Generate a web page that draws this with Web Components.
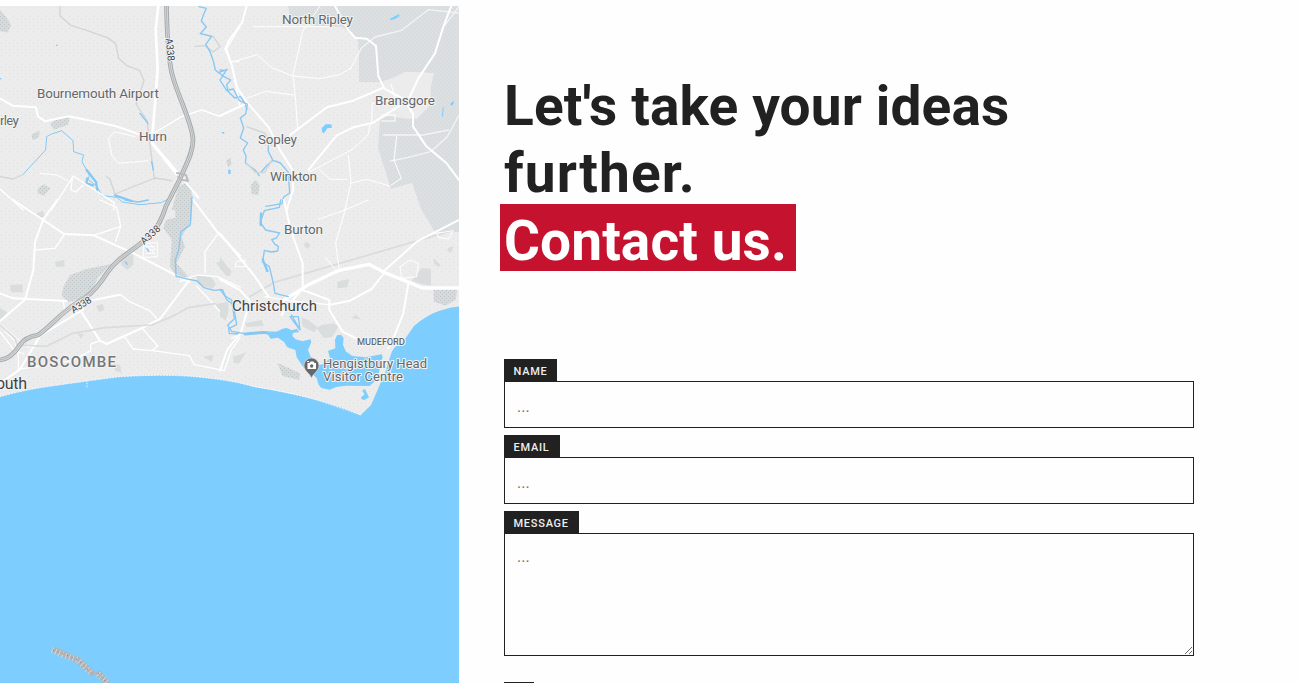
<!DOCTYPE html>
<html lang="en">
<head>
<meta charset="utf-8">
<title>Contact us</title>
<style>
html,body{margin:0;height:100%;overflow:hidden;background:#fefefe}
body{font-family:Roboto,"Liberation Sans",sans-serif;color:#212121}
</style>
</head>
<body>
<contact-page></contact-page>
<script>
class AreaMap extends HTMLElement {
  constructor() {
    super();
    this.attachShadow({mode: 'open'}).innerHTML = `
<style>
:host{display:block;width:459px;height:677px;overflow:hidden}
svg{display:block;width:459px;height:677px}
.ln{fill:none;stroke-linejoin:round;stroke-linecap:round}
.w{stroke:#fff}
.major{stroke-width:6}.minor{stroke-width:4}.thin{stroke-width:3;stroke-dasharray:3 2}
.river{stroke:#86c8f3;stroke-width:4}
.stream{stroke:#d0d5d6;stroke-width:4}
.rail{stroke:#d9dcdc;stroke-width:5}
.park{fill:#d9ddde}.wood{fill:url(#wood)}.water{fill:#7dceff}
text{font-family:Roboto,sans-serif;fill:#64686b;stroke:#f3f3f3;stroke-width:2px;paint-order:stroke;stroke-linejoin:round}
.dk{fill:#404346}
</style>
<svg viewBox="0 6 459 677">
<defs>
<pattern id="land" width="8" height="6" patternUnits="userSpaceOnUse"><rect width="8" height="6" fill="#ececec"/><path d="M1 1h1v1H1zM5 4h1v1H5z" fill="#dfe1e1"/></pattern>
<pattern id="forest" width="4" height="4" patternUnits="userSpaceOnUse"><rect width="4" height="4" fill="#d9dddf"/><path d="M0 0h1v1H0zM2 2h1v1H2z" fill="#e3e6e7"/></pattern>
<pattern id="wood" width="12" height="12" patternUnits="userSpaceOnUse"><rect width="12" height="12" fill="#d6dadb"/><path d="M0 0h3v3H0zM6 6h3v3H6z" fill="#bfc5c7"/></pattern>
</defs>
<rect y="6" width="459" height="677" fill="url(#land)"/>
<path fill="url(#forest)" d="M288 6H459V232L435 232 421 209 412 183 391 189 385 170 378 148 380 120 388 116 410 119 430 105 431 86 434 73 405 72 384 82H359V58L358 39 342 27 316 26 290 18Z"/>

<g transform="scale(.333333)">
 <path class="wood" d="M0 30l18 20 16 26-12 22-22-6zM150 372l18-15 42-5-6 22-42 15zM95 402l25-10-5 22-18 6zM115 565l15-12 22 12-20 22-20-7z"/>
 <path class="wood" d="M535 560l20-10 20 20v65l-60-5z"/>
 <path class="ln stream" d="M180 18v30l32 28 48 15 62 22 25 17 9 45 25 22 38 15 13 30-24 70 33 50 10 80 12 95M320 530l10 8 14 42M345 582l120-48 50 8M0 530l40 7 32-15"/>
 <path class="ln river" style="stroke-width:3" d="M72 520l65-70 3-40 15-8 30-10 34 30 2 33 30 10-5 20 22 40-3 14 26 20 15 28 45 5 15 14 54 8 64-6 32-17 10-20"/>
 <path class="ln river" style="stroke-width:7" d="M260 510l28 36 4 26M262 535l-3 15 20 6M345 586l50 17"/>
 <path class="ln stream" d="M600 100l40 10 20 30-20 15-25-18-30 2"/>
 <path class="ln river" d="M597 20l22 5-8 18-7 20 15 18-18 20 34 8-18 24 14 24 10 30 5 23 26 20 20 10-12 14 4 20 20 20 17-5 10 15 10 24M655 218l27-10M420 340l24 30M455 485l5 25"/>
 <path class="ln river" d="M170 136h2M667 398h4M0 236h2M687 510v10M576 590l-3 50"/>
 <path class="ln w major" d="M0 295l38 22 70 5 6 28 22 14 70-15 70 14 70 15 58 20 45 20 76 90 70 85M455 430l75 94"/>
 <path class="ln w" stroke-width="8" d="M475 18l-8 70 6 120-15 190"/>
 <path class="ln w minor" d="M460 400l85-50 60-20 52 18 60-28M720 80l-40 65 15 50 20 100 5 25M0 567l70 63M155 630l65-102 122 80v22M218 530l-6 40 15 6 22-20"/>
 <path class="ln w thin" d="M405 410l-60-15-20 20 10 50 20 25 90-8M120 520l50 5 35 18M690 185h30"/>
</g>

<g transform="translate(220) scale(.333333)">
 <path fill="#ececec" d="M490 244l85-27 65 3-15 30 10 60-45 48-60-30-35 5z"/>
 <path class="wood" d="M92 555l15-15 12 16-4 30-20-4zM18 480l14-6 2 22-10 6z"/>
 <path class="ln w major" d="M80 18l-14 50-40 55-10 24 20 50 15 65 30 45 65 75 35 70 35 55 4 60-20 63M345 18l38 70 22 25 35 3 28 22 7 90 18 38 56 30 30 45v38l40 60 60 50 41 55M210 405l110-83 80-20 88-38M265 510l85-104 50-24 60-14 105-68 30-65 50-75 25-80 25-65M0 348l72-34"/>
 <path class="ln w minor" d="M390 208l35-65 40-32 80-20 80-62 90 10M675 75l42-55M490 405h120l75-15M717 345l-35 65-50 45-70 18-50 10" stroke-opacity=".65"/>
 <path class="ln w thin" d="M100 80h240M300 18l-52 75-15 70-14 60 8 80 6 85M32 187l80-23 45 40 62 24 80 8 60-12 35-20M82 294l55-20 85 11M455 370l2-60 70-12-14-45M450 375l-5 28-48 45-90 48-40 20M385 465l8 82-18 83M390 550l50-12 70 20M485 345h40v18h-40M530 410l-8 70 22 55-30 20M300 510l30 28h50"/>
 <path class="ln river" d="M0 210l18 2-10 16-8 12 20 32 20-5 18 35 24 10-5 30-16 12 10 30-10 30 22 15-13 20 8 20-2 20 30 22 12 16M124 516l15-18 20-17 22 8 24 28 4 62-18 12-5 20-48 8M159 482l-14-28v-18"/>
 <path class="ln stream" d="M80 380l55 20 20 36M78 488l30 30h25l22-36"/>
 <path class="water" d="M305 385l12-12h17l2 10-14 2-10 15-6-4zM510 56l16-8 10-5 3 5-12 8-15 5zM26 510h6v12h-6zM690 313l10-10 2 5-6 9zM668 322h3l-2 28h-3zM7 397l4 3-2 3z"/>
</g>

<g transform="translate(0 200) scale(.333333)">
 <path class="wood" d="M190 260l20-35 50-18 75-15-42 42-23 55-65 18-20-20zM525 0h50v60l-30 50 10 30-25 50 35 40-35 4-20-35 5-80-25-35 8-25 28-6z"/>
 <path class="park" d="M362 175l38-12v32l-18 14-18-14zM110 40l20-8 3 18-18 4zM165 185l28-5v20h-25zM30 255l38-2v24h-35zM0 325l22 12-22 24zM288 318l20-6 5 17-15 8zM648 188l15-5 28 30v15h-12zM588 222l45 10 15 20-10 14-45-14zM645 312l40-6v30l-8 24zM233 400l18 2-8 15zM610 470l30-5-5 20zM340 490l20 6 5 22-20-5zM700 470l20-5v25h-18z"/>
 <path class="ln w major" d="M40 0l90 60 62 42 90 4 120 55 165 85M580 0l75 100 65 67M0 280l40 15 160 8M0 363l75-64 25-88 5-85 24-66 42-60M570 237l-90 120-60 30-100 45-20-10-55-85M270 302l90-18M250 328l-130 80-60 100-60 42"/>
 <path class="ln w minor" d="M105 150l60-5 28-42M282 106l80-27-12-57-50-22M362 79l-15 45M362 284l25 20 62 28 20 22M375 412l25 35 58 5 110 15 15 27 90 18 20-60 27-40M425 383l48 55-15 12M302 422l-30 10v20l-55 30-162 26v-40l-10-45-30-30M190 305l5 30M0 395l42 55 30 12M655 100l-40 55v63M540 245l50-20 60 4 70 32M590 258l92 100"/>
 <path class="ln w thin" d="M0 372l30 25 55 45 25-10M430 130l42-2v42l-42 2zM436 140h30M436 150h30M436 160h30M440 135l25 28M448 130l18 20"/>
 <path class="ln rail" d="M60 435l80 4 75-38 100-18 140-8 60-25 50-27 80-12"/>
 <path class="ln rail" d="M0 375l45 40 10 35"/>
 <path class="ln river" d="M375 0l40 6 30-6M575 0l-4 75-28 20-7 55-10 30 2 48 24 7 40 8 20 20 30 8 26-2 12 30 20 15 10 60-24 12 2 14 30 2"/>
 <path class="ln river" d="M376 185l6 8M440 146l6 7M270 260h1"/>
</g>

<g transform="translate(220 200) scale(.333333)">
 <path class="park" d="M0 170l35 45-12 12-23-20zM0 308l20 10v45L0 350zM245 352l20 8 28 22-10 15-36-18zM290 385l15-10 35-5 15 10-18 30-25 5zM352 245l35-8-5 25-30 3zM575 242l30-38 28 3v50l-25-4zM640 175l20 18-2 8-15-8zM683 144l18-6-8 20-10-4zM395 355l12-12 15 15zM250 135l10-10 12 10-8 12zM75 370l50-10 6 18-50 3zM40 470l38-12-20 30-15-2z"/>
 <path class="wood" d="M172 488l68 32-2 20-50-12zM640 264h72l-5 35-30 18-35-12z"/>
 <path class="ln rail" d="M90 290l70-42 557-162"/>
 <path class="ln w" stroke-width="10" d="M190 302l72-46 95-45 90-18 45 24 75 30 40 17h110"/>
 <path class="ln w major" d="M0 100l105 130 40 60M0 238l60 32 30 34-28 95-40 50L0 512M192 0l20 90 36 100v80l80 30v30l40 65 50 25M490 215l100-90 127-65M245 270l-45 50-15 25M330 314l60-12 65-35 35-45M565 250l-15 90-30 75-20 40"/>
 <path class="ln w minor" d="M135 290l70 12 122 12M60 404l-25 10"/>
 <path class="ln w thin" d="M445 0l-70 30-80 28M377 25l-30 103 10 75M315 170l30 38M540 200l30-20 25 10-5 40-45 5zM50 185l25-5v20H45zM650 100l50-8-15 25-30-5zM0 543l100 17 120 22"/>
 <path class="ln river" d="M182 0l-4 22-45 10-12 35 16 23 28 6 14 3-10 15-14 5 10 14 10 6-2 14-20 3-20-5-5 35 20 14 12 50 5 30 40 10M0 268l15 20 20 12 8 56-20 20 12 18 35 6 60-5 60 4 45-4M215 345l25 45-30-40h25l5 40"/>
 <path class="ln river" style="stroke-width:7" d="M123 40l-1 35M128 178l14 35M75 403l55-5 50 9 35-12 15-5"/>
</g>

<g transform="translate(285 315) scale(.333333)" class="water">
 <path d="M-55 53l20 2 28-14 12-2 20 8-3 16 10 10 20 6 24-6 3 8-10 24 8 20 18 10 6 15 12-2 22-18-6-22 22-8-1-26 6-13 12-2 8 10-2 20 8 20 20 14 40 4 48-9 6 16-12 36-14 28-16 15-70-1-30 4-20 8-25-5-8-10-6-20-20-18-20-14-20-30-4-22-24-8-10-16-18-13-22 3z"/>
 <path d="M228 247l10-8-6-14 8-2 12 24-14 8-8-2z"/>
</g>
<path class="water" d="M0 396.700Q20 391 43 387.300Q83 381.500 117 377Q160 374 193 376.500Q232 380 253 386.500Q293 393 320 401Q350 410 360.500 415.300L371 405 381 382 388 357 395 347 403 341.700Q410 332 414 326Q433 309 459 306.500V683H0Z"/>
<path class="ln w" stroke-width=".8" stroke-dasharray="1 2" d="M0 396.700Q20 391 43 387.300Q83 381.500 117 377Q160 374 193 376.500Q232 380 253 386.500Q293 393 320 401L361 415M87 380v7"/>
<path fill="#ececec" d="M378 379l3-18 6-12 6-1-4 12-6 20-6 2z"/>

<g class="ln">
 <path d="M166.500 6C167 35 168 53 171 69C174 89 193 123 193 140C193 154 185 166 180 179L166 206Q161 223 151 235C132 252 119 256 107 273Q97 289 85 298C63 309 51 327 38 335Q25 337 20 345Q11 359 0 360" stroke="#a6aaad" stroke-width="4.700"/>
 <path d="M166.500 6C167 35 168 53 171 69C174 89 193 123 193 140C193 154 185 166 180 179L166 206Q161 223 151 235C132 252 119 256 107 273Q97 289 85 298C63 309 51 327 38 335Q25 337 20 345Q11 359 0 360" stroke="#d6d9da" stroke-width="2.600"/>
 <path d="M166.500 6C167 35 168 53 171 69C174 89 193 123 193 140C193 154 185 166 180 179L166 206Q161 223 151 235C132 252 119 256 107 273Q97 289 85 298C63 309 51 327 38 335Q25 337 20 345Q11 359 0 360" stroke="#aaadaf" stroke-width=".8"/>
 <path d="M177 173l9 2 2 6-5-1-5-3" stroke="#b9bcbe" stroke-width="2"/>
</g>
<g font-size="13.500">
 <text x="282" y="23.500" textLength="71">North Ripley</text>
 <text x="37" y="97.500" textLength="122">Bournemouth Airport</text>
 <text x="0" y="125" textLength="19">rley</text>
 <text x="139" y="140.500" textLength="28">Hurn</text>
 <text x="375" y="104.500" textLength="60">Bransgore</text>
 <text x="258" y="143.500" textLength="39">Sopley</text>
 <text x="270" y="180.500" textLength="47">Winkton</text>
 <text x="284" y="233.500" textLength="39">Burton</text>
 <text class="dk" x="232" y="311" font-size="15" textLength="85">Christchurch</text>
 <text class="dk" x="-4" y="388.500" font-size="16" textLength="31">outh</text>
 <text x="27" y="367" font-size="15" font-weight="500" textLength="89" style="fill:#747779">BOSCOMBE</text>
 <text x="357" y="345" font-size="9.500" font-weight="500" textLength="48">MUDEFORD</text>
 <text x="323" y="367.500" font-size="13" textLength="104">Hengistbury Head</text>
 <text x="323" y="381" font-size="13" textLength="80">Visitor Centre</text>
 <g font-size="10"><text class="dk" transform="translate(165.500 38.500) rotate(84)" textLength="23">A338</text>
 <text class="dk" transform="translate(144 245) rotate(-42)" textLength="23">A338</text>
 <text class="dk" transform="translate(73.500 313.500) rotate(-32)" textLength="22">A338</text></g>
</g>
<path d="M311.500 378.500C310 373 304 371.500 304 365.500a7.500 7.500 0 0 1 15 0C319 371.500 313 373 311.500 378.500Z" fill="#66696b" stroke="#ececec" stroke-width=".6"/>
<path d="M307.500 363h2l1-1.500h3l1 1.500h1.500v6h-8.500z" fill="#fff"/><circle cx="311.700" cy="366" r="1.700" fill="#66696b"/><path d="M307 361.500h2" stroke="#fff"/>
<g class="ln" stroke-width="6"><path d="M55 650l11 5 12 5 14 13M99 674l8 9" stroke="#aeb4b9"/>
<path d="M52 650l11 5 15 5 14 14M98 674l10 9" stroke="#d6d4d2" stroke-dasharray="1 2.700" stroke-linecap="butt"/><path d="M53 650l11 4 14 6 13 13M98 673l9 10" stroke="#777e85" stroke-width="1" stroke-dasharray="1 4" stroke-linecap="butt"/></g>
</svg>`;
  }
}
class PageHeading extends HTMLElement {
  constructor() {
    super();
    this.attachShadow({mode: 'open'}).innerHTML = `
<style>
:host{display:block}
h1{margin:0;font:700 55px/67px Roboto,sans-serif;white-space:nowrap}
span{display:block}
.a{letter-spacing:.13px}.b{letter-spacing:1.100px}
.hl{box-sizing:border-box;width:296px;margin:-3px 0 0 -4px;padding-left:4px;height:67px;line-height:75px;background:#c4122f;color:#fff;letter-spacing:.1px}
</style>
<h1><span class="a">Let's take your ideas</span><span class="b">further.</span><span class="hl"><slot></slot></span></h1>`;
  }
}
class FormField extends HTMLElement {
  constructor() {
    super();
    this.attachShadow({mode: 'open'});
  }
  connectedCallback() {
    const area = this.hasAttribute('multiline');
    this.shadowRoot.innerHTML = `
<style>
:host{display:flex;flex-direction:column;align-items:flex-start}
label{box-sizing:border-box;height:22px;width:var(--tab);padding:1px 0 0 9.500px;background:#212121;color:#eee;font:500 11px/23px Roboto,sans-serif;letter-spacing:.75px}
input,textarea{display:block;box-sizing:border-box;width:100%;height:47px;margin:0;border:1px solid #212121;border-radius:0;background:#fefefe;padding:3px 12px 0;font:16px/20px Roboto,sans-serif;outline:0}
textarea{height:123px;padding:13px 12px}
::placeholder{color:#757575}
</style>
<label for="f"><slot></slot></label>
${area ? '<textarea id="f" placeholder="..."></textarea>' : '<input id="f" placeholder="...">'}`;
  }
}
class ContactPage extends HTMLElement {
  constructor() {
    super();
    this.attachShadow({mode: 'open'}).innerHTML = `
<style>
:host{display:grid;grid-template-columns:459px 690px;column-gap:45px;height:100vh;overflow:hidden;background:#fefefe}
area-map{margin-top:6px}
main{padding-top:73px}
page-heading{height:198px}
form{display:flex;flex-direction:column;gap:7px;margin-top:88px}
.next{width:30px;height:22px;background:#212121;margin-top:19px}
</style>
<area-map></area-map>
<main>
<page-heading>Contact us.</page-heading>
<form>
<form-field style="--tab:53px">NAME</form-field>
<form-field style="--tab:56px">EMAIL</form-field>
<form-field style="--tab:75px" multiline>MESSAGE</form-field>
<div class="next"></div>
</form>
</main>`;
  }
}
customElements.define('area-map', AreaMap);
customElements.define('page-heading', PageHeading);
customElements.define('form-field', FormField);
customElements.define('contact-page', ContactPage);
</script>
</body>
</html>
